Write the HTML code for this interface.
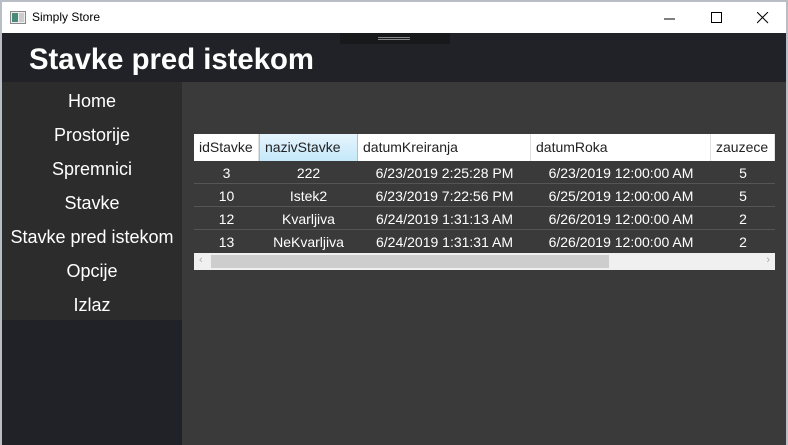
<!DOCTYPE html>
<html><head><meta charset="utf-8"><style>
*{margin:0;padding:0;box-sizing:border-box}
body{width:788px;height:445px;overflow:hidden;background:#b9bec6;font-family:"Liberation Sans",sans-serif;position:relative}
.win{position:absolute;left:2px;top:2px;width:784px;height:443px;background:#3a3a3a}
.tb{position:absolute;left:0;top:0;width:784px;height:31px;background:#fff}
.tb .t{position:absolute;left:30px;top:8px;font-size:12px;color:#000}
.hdr{position:absolute;left:0;top:31px;width:784px;height:49px;background:#212227}
.hdr h1{position:absolute;left:27px;top:10px;font-size:29.3px;font-weight:bold;color:#fff}
.handle{position:absolute;left:338px;top:0;width:110px;height:11px;background:#18191b}
.side{position:absolute;left:0;top:80px;width:180px;height:363px;background:#212227}
.menu{position:absolute;left:0;top:0;width:180px;height:238px;background:#2c2c2c;padding-top:2px}
.menu div{height:34px;line-height:34px;text-align:center;color:#fff;font-size:18px}
.grid{position:absolute;left:192px;top:132px;width:581px}
.row{display:flex;height:23px;border-bottom:1px solid #555;color:#fff;font-size:14px;line-height:24px}
.row div{text-align:center;overflow:hidden;white-space:nowrap}
.head{background:#fff;color:#222;height:27px;line-height:27px;border-bottom:none}
.head div{text-align:left;padding-left:5px;border-right:1px solid #e0e0e0}
.c1{width:65px}.c2{width:99px}.c3{width:173px}.c4{width:180px}.c5{width:64px}
.sb{height:17px;background:#f0f0f0;position:relative}
.sb .th{position:absolute;left:17px;top:2px;width:398px;height:13px;background:#cdcdcd}
</style></head><body>
<div class="win">
<div class="tb">
<svg style="position:absolute;left:8px;top:9px" width="16" height="13"><rect x="0.5" y="0.5" width="15" height="12" fill="#eee" stroke="#888"/><rect x="2" y="2" width="6" height="9" fill="#4a8a7a"/><rect x="9" y="2" width="5" height="9" fill="#ccc"/></svg>
<span class="t">Simply Store</span>
<svg style="position:absolute;left:662px;top:10px" width="12" height="12"><line x1="0" y1="7" x2="11" y2="7" stroke="#000"/></svg>
<svg style="position:absolute;left:709px;top:10px" width="12" height="12"><rect x="0.5" y="0.5" width="10" height="10" fill="none" stroke="#000"/></svg>
<svg style="position:absolute;left:755px;top:10px" width="12" height="12"><path d="M0 0L11 11M11 0L0 11" stroke="#000"/></svg>
</div>
<div class="hdr"><div class="handle"><div style="position:absolute;left:38px;top:4px;width:32px;height:1px;background:#888"></div><div style="position:absolute;left:38px;top:6px;width:32px;height:1px;background:#888"></div></div><h1>Stavke pred istekom</h1></div>
<div class="side"><div class="menu">
<div>Home</div><div>Prostorije</div><div>Spremnici</div><div>Stavke</div><div>Stavke pred istekom</div><div>Opcije</div><div>Izlaz</div>
</div></div>
<div class="grid">
<div class="row head"><div class="c1">idStavke</div><div class="c2" style="background:linear-gradient(#e6f5fd,#c4e8fa);border-left:1px solid #8ccde9;border-right:1px solid #8ccde9">nazivStavke</div><div class="c3">datumKreiranja</div><div class="c4">datumRoka</div><div class="c5">zauzece</div></div>
<div class="row"><div class="c1">3</div><div class="c2">222</div><div class="c3">6/23/2019 2:25:28 PM</div><div class="c4">6/23/2019 12:00:00 AM</div><div class="c5">5</div></div>
<div class="row"><div class="c1">10</div><div class="c2">Istek2</div><div class="c3">6/23/2019 7:22:56 PM</div><div class="c4">6/25/2019 12:00:00 AM</div><div class="c5">5</div></div>
<div class="row"><div class="c1">12</div><div class="c2">Kvarljiva</div><div class="c3">6/24/2019 1:31:13 AM</div><div class="c4">6/26/2019 12:00:00 AM</div><div class="c5">2</div></div>
<div class="row" style="border-bottom:none"><div class="c1">13</div><div class="c2">NeKvarljiva</div><div class="c3">6/24/2019 1:31:31 AM</div><div class="c4">6/26/2019 12:00:00 AM</div><div class="c5">2</div></div>
<div class="sb"><span style="position:absolute;left:5px;top:1px;font-size:11px;color:#aaa">&lsaquo;</span><div class="th"></div><span style="position:absolute;right:5px;top:1px;font-size:11px;color:#aaa">&rsaquo;</span></div>
</div>
</div>
</body></html>
